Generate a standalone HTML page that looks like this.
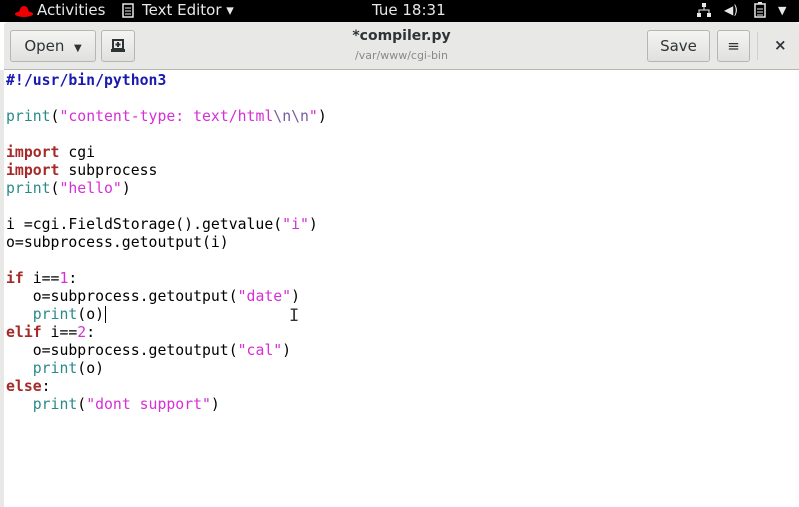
<!DOCTYPE html>
<html><head><meta charset="utf-8"><style>
*{margin:0;padding:0;box-sizing:border-box}
body{width:799px;height:507px;overflow:hidden;background:#fff;font-family:"DejaVu Sans","Liberation Sans",sans-serif;position:relative}
#top{position:absolute;left:0;top:0;width:799px;height:22px;background:#000;color:#e8e8e8;font-size:15px}
#top span{position:absolute;top:1px}
#hdr{position:absolute;left:4px;top:22px;width:795px;height:48px;background:#e8e8e7;border-bottom:1px solid #b6b6b3;border-radius:4px 4px 0 0}
.btn{position:absolute;top:8px;height:32px;border:1px solid #b6b6b3;border-radius:3px;background:linear-gradient(#f4f4f3,#e0e0de);font-size:15px;color:#2e3436;text-align:center;line-height:30px}
#left{position:absolute;left:0;top:70px;width:4px;height:437px;background:#e8e8e7}
#code{position:absolute;left:6px;top:72px;font-family:"DejaVu Sans Mono",monospace;font-size:14.8px;line-height:18px;white-space:pre;color:#000}
.sh{color:#1a1ab0;font-weight:bold}.p{color:#2a8a8a}.s{color:#d62fd6}.k{color:#a52a2a;font-weight:bold}
</style></head><body>
<div id="top">
<svg style="position:absolute;left:14px;top:4px" width="20" height="14" viewBox="0 0 20 14"><ellipse cx="10" cy="10" rx="9" ry="3" fill="#e00"/><path d="M5 9 Q6 2 10 2 Q14 2 15 9Z" fill="#e00"/></svg>
<span style="left:37px">Activities</span>
<svg style="position:absolute;left:122px;top:3px" width="12" height="15" viewBox="0 0 12 15"><rect x="1" y="1" width="10" height="13" fill="none" stroke="#e8e8e8" stroke-width="1.5"/><path d="M3 5h6M3 8h6M3 11h6" stroke="#e8e8e8"/></svg>
<span style="left:142px">Text Editor ▾</span>
<span style="left:372px">Tue 18:31</span>
<svg style="position:absolute;left:697px;top:3px" width="14" height="14" viewBox="0 0 14 14" fill="#e8e8e8"><rect x="5" y="0" width="4" height="4"/><rect x="0" y="10" width="4" height="4"/><rect x="10" y="10" width="4" height="4"/><path d="M7 4v3M2 10V7h10v3" stroke="#e8e8e8" fill="none"/></svg>
<span style="left:724px;font-size:12px;top:3px">◀)</span>
<svg style="position:absolute;left:754px;top:2px" width="12" height="16" viewBox="0 0 12 16"><rect x="1" y="2" width="10" height="13" fill="none" stroke="#e8e8e8" stroke-width="1.5"/><rect x="4" y="0" width="4" height="2" fill="#e8e8e8"/><path d="M3 7h6M3 10h6M3 13h6" stroke="#e8e8e8"/></svg>
<span style="left:778px;font-size:11px;top:4px">▼</span>
</div>
<div id="hdr">
<div class="btn" style="left:6px;width:86px">Open&nbsp;&nbsp;<span style="font-size:10px">▼</span></div>
<div class="btn" style="left:97px;width:34px"><svg width="16" height="16" viewBox="0 0 16 16" style="margin-top:7px"><path d="M3 2h10v9H3z" fill="none" stroke="#2e3436" stroke-width="2"/><path d="M1 11h14v3H1z" fill="#2e3436"/><path d="M8 4v5M5.5 6.5h5" stroke="#2e3436" stroke-width="2"/></svg></div>
<div style="position:absolute;left:0;width:795px;top:6px;text-align:center;font-size:14px;font-weight:bold;color:#2e3436">*compiler.py</div>
<div style="position:absolute;left:0;width:795px;top:27px;text-align:center;font-size:11px;color:#888a85">/var/www/cgi-bin</div>
<div class="btn" style="left:643px;width:63px">Save</div>
<div class="btn" style="left:713px;width:33px">≡</div>
<div style="position:absolute;left:753px;top:10px;width:1px;height:28px;background:#d0d0ce"></div>
<div style="position:absolute;left:770px;top:14px;font-size:15px;font-weight:bold;color:#2e3436">×</div>
</div>
<div id="left"></div>
<div id="code"><span class="sh">#!/usr/bin/python3</span>

<span class="p">print</span>(<span class="s">"content-type: text/html</span><span class="s" style="color:#7a5aa0">\n\n</span><span class="s">"</span>)

<span class="k">import</span> cgi
<span class="k">import</span> subprocess
<span class="p">print</span>(<span class="s">"hello"</span>)

i =cgi.FieldStorage().getvalue(<span class="s">"i"</span>)
o=subprocess.getoutput(i)

<span class="k">if</span> i==<span class="s">1</span>:
   o=subprocess.getoutput(<span class="s">"date"</span>)
   <span class="p">print</span>(o)<span style="border-left:1px solid #000;margin-left:1px"></span>
<span class="k">elif</span> i==<span class="s">2</span>:
   o=subprocess.getoutput(<span class="s">"cal"</span>)
   <span class="p">print</span>(o)
<span class="k">else</span>:
   <span class="p">print</span>(<span class="s">"dont support"</span>)</div>
<div style="position:absolute;left:289px;top:306px;font-family:'DejaVu Sans Mono',monospace;font-size:17px;color:#333">I</div>
</body></html>
